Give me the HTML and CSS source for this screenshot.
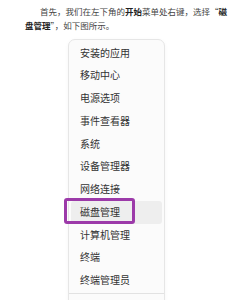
FILE: index.html
```html
<!DOCTYPE html>
<html lang="zh">
<head>
<meta charset="utf-8">
<link rel="stylesheet" href="styles.css">
</head>
<body>
<p class="intro">首先，我们在左下角的<b>开始</b>菜单处右键，选择“<b>磁盘管理</b>”，如下图所示。</p>
<div class="menu">
  <div class="item">安装的应用</div>
  <div class="item">移动中心</div>
  <div class="item">电源选项</div>
  <div class="item">事件查看器</div>
  <div class="item">系统</div>
  <div class="item">设备管理器</div>
  <div class="item">网络连接</div>
  <div class="item hover">磁盘管理<span class="mark"></span></div>
  <div class="item">计算机管理</div>
  <div class="item">终端</div>
  <div class="item">终端管理员</div>
  <div class="sep"></div>
  <div class="item">关机或注销</div>
</div>
</body>
</html>
```
FILE: styles.css
```css
html, body {
  margin: 0;
  padding: 0;
  background: #ffffff;
  width: 250px;
  height: 300px;
  overflow: hidden;
  font-family: "Noto Sans CJK SC", "Noto Sans", sans-serif;
}
.intro {
  margin: 0;
  padding: 4px 20px 0 25px;
  font-size: 8.5px;
  line-height: 14px;
  text-indent: 15px;
  color: #444;
}
.intro b {
  color: #222;
  font-weight: 700;
}
.menu {
  margin: 7px 0 0 68px;
  width: 97px;
  box-sizing: border-box;
  background: #fbfbfb;
  border: 1px solid #e6e6e6;
  border-radius: 7px;
  box-shadow: 0 1px 4px rgba(0,0,0,0.04);
  padding-top: 1.5px;
}
.item {
  position: relative;
  height: 22.75px;
  line-height: 22.75px;
  padding-left: 9px;
  font-size: 10px;
  color: #333;
  margin: 0 2px;
  border-radius: 3px;
}
.item.hover {
  background: #eeeeee;
}
.mark {
  position: absolute;
  left: -7px;
  top: -2.5px;
  width: 71px;
  height: 26px;
  box-sizing: border-box;
  border: 3px solid #9c3aa9;
  border-radius: 3px;
}
.sep {
  height: 1px;
  background: #e2e2e2;
  margin: 1px 0 2px;
}
```
